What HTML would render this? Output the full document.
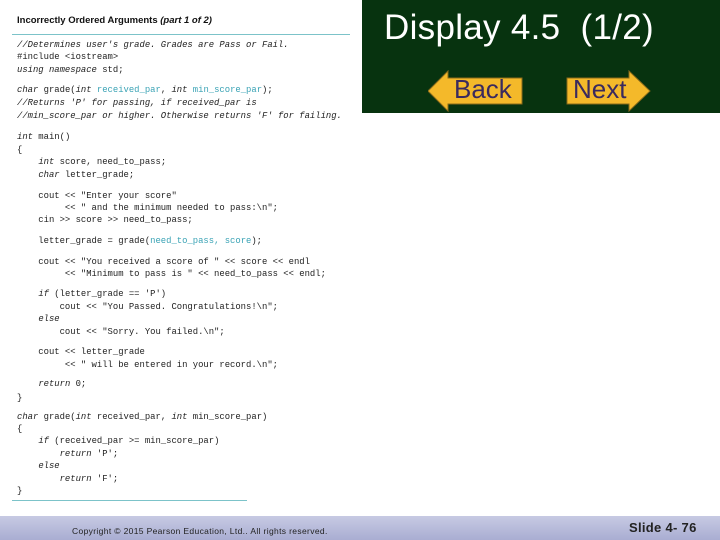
<!DOCTYPE html>
<html><head><meta charset="utf-8"><style>
body{margin:0;width:720px;height:540px;position:relative;background:#fff;overflow:hidden;font-family:"Liberation Sans",sans-serif}
.l{position:absolute;left:17px;font-family:"Liberation Mono",monospace;font-size:8.9px;color:#222;white-space:pre;line-height:10px}
.b{color:#3aa3b5}
i{font-style:italic}
#g{position:absolute;left:362px;top:0;width:358px;height:113px;background:#07330f}
#t{position:absolute;left:384px;top:8px;color:#fff;font-size:35px;white-space:pre;letter-spacing:0.3px}
.btn{position:absolute;top:70px;height:42px}
#foot{position:absolute;left:0;top:516px;width:720px;height:24px;background:linear-gradient(#c7cae3,#a9add2)}
</style></head><body>
<div style="position:absolute;left:17px;top:15px;font-size:9.5px;font-weight:bold;color:#111">Incorrectly Ordered Arguments <i>(part 1 of 2)</i></div>
<div style="position:absolute;left:12px;top:34px;width:338px;height:1px;background:#7cc3c9"></div>
<div class="l" style="top:40px"><i>//Determines user's grade. Grades are Pass or Fail.</i></div>
<div class="l" style="top:52px">#include &lt;iostream&gt;</div>
<div class="l" style="top:65px"><i>using namespace</i> std;</div>
<div class="l" style="top:85px"><i>char</i> grade(<i>int</i> <span class="b">received_par</span>, <i>int</i> <span class="b">min_score_par</span>);</div>
<div class="l" style="top:98px"><i>//Returns 'P' for passing, if received_par is</i></div>
<div class="l" style="top:111px"><i>//min_score_par or higher. Otherwise returns 'F' for failing.</i></div>
<div class="l" style="top:132px"><i>int</i> main()</div>
<div class="l" style="top:145px">{</div>
<div class="l" style="top:157px">    <i>int</i> score, need_to_pass;</div>
<div class="l" style="top:170px">    <i>char</i> letter_grade;</div>
<div class="l" style="top:191px">    cout &lt;&lt; "Enter your score"</div>
<div class="l" style="top:203px">         &lt;&lt; " and the minimum needed to pass:\n";</div>
<div class="l" style="top:215px">    cin &gt;&gt; score &gt;&gt; need_to_pass;</div>
<div class="l" style="top:236px">    letter_grade = grade(<span class="b">need_to_pass, score</span>);</div>
<div class="l" style="top:257px">    cout &lt;&lt; "You received a score of " &lt;&lt; score &lt;&lt; endl</div>
<div class="l" style="top:269px">         &lt;&lt; "Minimum to pass is " &lt;&lt; need_to_pass &lt;&lt; endl;</div>
<div class="l" style="top:289px">    <i>if</i> (letter_grade == 'P')</div>
<div class="l" style="top:302px">        cout &lt;&lt; "You Passed. Congratulations!\n";</div>
<div class="l" style="top:314px">    <i>else</i></div>
<div class="l" style="top:327px">        cout &lt;&lt; "Sorry. You failed.\n";</div>
<div class="l" style="top:347px">    cout &lt;&lt; letter_grade</div>
<div class="l" style="top:360px">         &lt;&lt; " will be entered in your record.\n";</div>
<div class="l" style="top:379px">    <i>return</i> 0;</div>
<div class="l" style="top:393px">}</div>
<div class="l" style="top:412px"><i>char</i> grade(<i>int</i> received_par, <i>int</i> min_score_par)</div>
<div class="l" style="top:424px">{</div>
<div class="l" style="top:436px">    <i>if</i> (received_par &gt;= min_score_par)</div>
<div class="l" style="top:449px">        <i>return</i> 'P';</div>
<div class="l" style="top:461px">    <i>else</i></div>
<div class="l" style="top:474px">        <i>return</i> 'F';</div>
<div class="l" style="top:486px">}</div>
<div style="position:absolute;left:12px;top:500px;width:235px;height:1px;background:#7cc3c9"></div>
<div id="g"></div>
<div id="t">Display 4.5  (1/2)</div>
<svg class="btn" style="left:428px" width="95" height="42" viewBox="0 0 95 42"><polygon points="0,21 20,1 20,8 94,8 94,34 20,34 20,41" fill="#f4b92a" stroke="#8a6a1a" stroke-width="1"/></svg>
<div style="position:absolute;left:454px;top:74px;font-size:26px;color:#3a2a5e">Back</div>
<svg class="btn" style="left:566px" width="85" height="42" viewBox="0 0 85 42"><polygon points="1,8 63,8 63,1 84,21 63,41 63,34 1,34" fill="#f4b92a" stroke="#8a6a1a" stroke-width="1"/></svg>
<div style="position:absolute;left:573px;top:74px;font-size:26px;color:#3a2a5e">Next</div>
<div id="foot"></div>
<div style="position:absolute;left:72px;top:526px;font-size:8.5px;letter-spacing:0.35px;color:#222">Copyright © 2015 Pearson Education, Ltd.. All rights reserved.</div>
<div style="position:absolute;left:629px;top:520px;font-size:13px;font-weight:bold;color:#222;letter-spacing:0.3px">Slide 4- 76</div>
</body></html>
